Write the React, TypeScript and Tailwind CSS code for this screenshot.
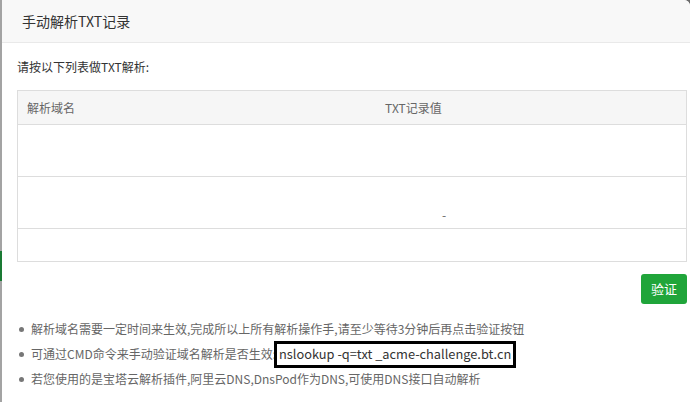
const notes = [
  '解析域名需要一定时间来生效,完成所以上所有解析操作手,请至少等待3分钟后再点击验证按钮',
  '可通过CMD命令来手动验证域名解析是否生效:',
  '若您使用的是宝塔云解析插件,阿里云DNS,DnsPod作为DNS,可使用DNS接口自动解析',
]

export default function App() {
  return (
    <div
      className="flex h-[402px] w-[690px] overflow-hidden bg-[#6b6b6b]"
      style={{ fontFamily: '"Noto Sans CJK SC", "Open Sans", sans-serif' }}
    >
      {/* backdrop sliver on the left */}
      <div className="flex w-[2px] flex-col bg-[#a3a3a3]">
        <div className="h-[251px]" />
        <div className="h-[30px] bg-[#1a7a34]" />
      </div>

      <div className="flex flex-1 flex-col overflow-hidden rounded-tr-[6px] bg-white">
        <div className="flex h-[43px] shrink-0 items-center border-b border-[#e9e9e9] bg-[#f8f8f8] pl-[20px] text-[14px] text-[#333]">
          手动解析TXT记录
        </div>

        <div className="pl-[15px] pr-[3px]">
          <p className="mt-[14px] text-[12px] leading-[20px] text-[#333]">请按以下列表做TXT解析:</p>

          <div className="mt-[13px] border border-[#ddd] text-[12px] text-[#666]">
            <div className="grid h-[34px] grid-cols-[358px_1fr] items-center border-b border-[#ddd] bg-[#f6f6f6]">
              <span className="pl-[9px]">解析域名</span>
              <span className="pl-[9px]">TXT记录值</span>
            </div>
            <div className="h-[52px] border-b border-[#ddd]" />
            <div className="grid h-[52px] grid-cols-[358px_1fr] border-b border-[#ddd]">
              <span />
              <span className="flex items-end pb-[4px] pl-[66px]">-</span>
            </div>
            <div className="h-[32px]" />
          </div>

          <div className="mt-[12px] flex justify-end">
            <button className="h-[30px] w-[46px] rounded-[3px] bg-[#20a53a] text-[13px] text-white">验证</button>
          </div>

          <ul className="mt-[15px] flex flex-col gap-[5px] text-[12px] text-[#666]">
            {notes.map((n, i) => (
              <li key={i} className="flex h-[20px] items-center">
                <span className="ml-[2px] mr-[7px] h-[5px] w-[5px] rounded-full bg-[#777]" />
                <span>{n}</span>
                {i === 1 ? (
                  <span className="relative ml-[3px] whitespace-nowrap text-[12.8px] text-[#333]">
                    nslookup -q=txt _acme-challenge.bt.cn
                    {/* highlight box drawn over the command */}
                    <span className="absolute -bottom-[4px] -left-[5px] -right-[5px] -top-[3px] border-[3px] border-black" />
                  </span>
                ) : null}
              </li>
            ))}
          </ul>
        </div>
      </div>
    </div>
  )
}
